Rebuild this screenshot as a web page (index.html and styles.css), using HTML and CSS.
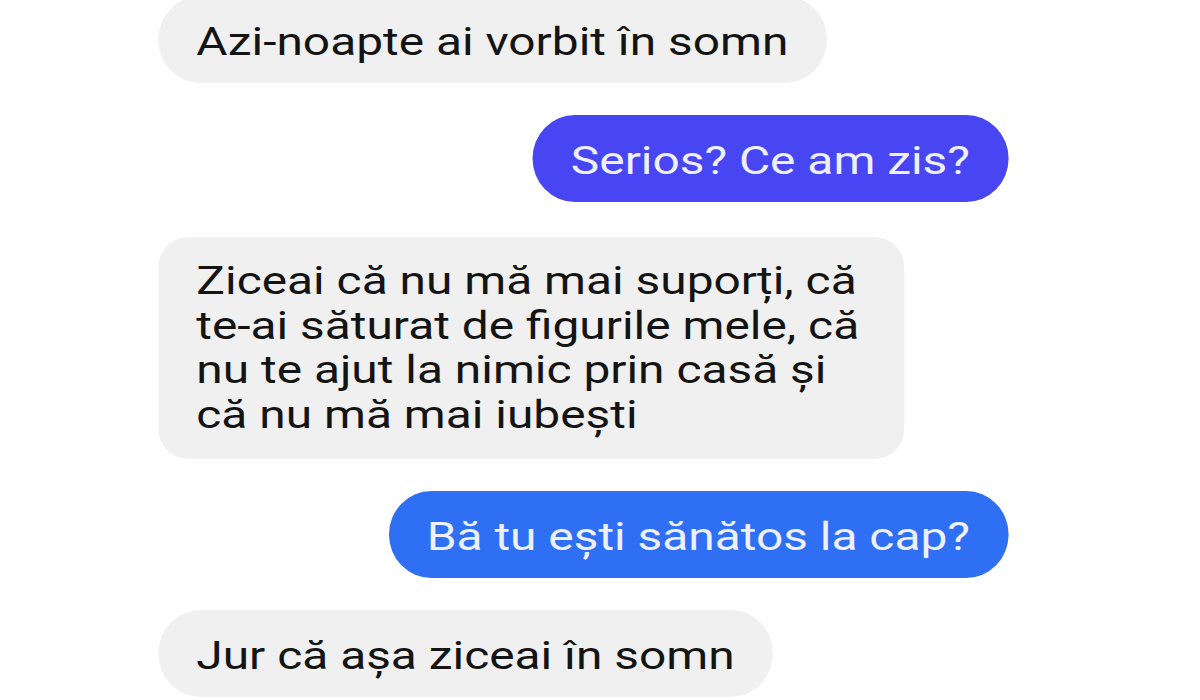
FILE: index.html
```html
<!DOCTYPE html>
<html lang="ro">
<head>
<meta charset="utf-8">
<title>Chat</title>
<link rel="stylesheet" href="styles.css">
</head>
<body>
<main class="chat">
  <div class="msg msg-in first">Azi-noapte ai vorbit în somn</div>
  <div class="msg msg-out out-violet">Serios? Ce am zis?</div>
  <div class="msg msg-in multi">Ziceai că nu mă mai suporți, că<br>te-ai săturat de figurile mele, că<br>nu te ajut la nimic prin casă și<br>că nu mă mai iubești</div>
  <div class="msg msg-out out-blue">Bă tu ești sănătos la cap?</div>
  <div class="msg msg-in">Jur că așa ziceai în somn</div>
</main>
</body>
</html>
```

FILE: styles.css
```css
html, body {
  margin: 0;
  padding: 0;
  background: #ffffff;
  width: 1200px;
  height: 700px;
  overflow: hidden;
}

/* the reference is a horizontally stretched phone screenshot */
.chat {
  width: 978px;
  box-sizing: border-box;
  display: flex;
  flex-direction: column;
  gap: 32px;
  padding: 0 156.5px 0 129px;
  font-family: Roboto, "Liberation Sans", Arial, sans-serif;
  transform: scaleX(1.227);
  transform-origin: 0 0;
}

.msg {
  font-size: 39px;
  line-height: 44px;
  padding: 24px 31px 19px;
  border-radius: 35px / 44px;
  white-space: nowrap;
}

.msg-in {
  align-self: flex-start;
  background: #f0f0f0;
  color: #141414;
}

.msg-out {
  align-self: flex-end;
  color: #eef0ff;
}

.first {
  margin-top: -4px;
}

.out-violet {
  background: #4845f3;
}

.out-blue {
  background: #2f6ff3;
}

.multi {
  border-radius: 25px / 30px;
  line-height: 44.5px;
  padding: 22px 37px 22px 31px;
  margin-top: 3px;
}
```
